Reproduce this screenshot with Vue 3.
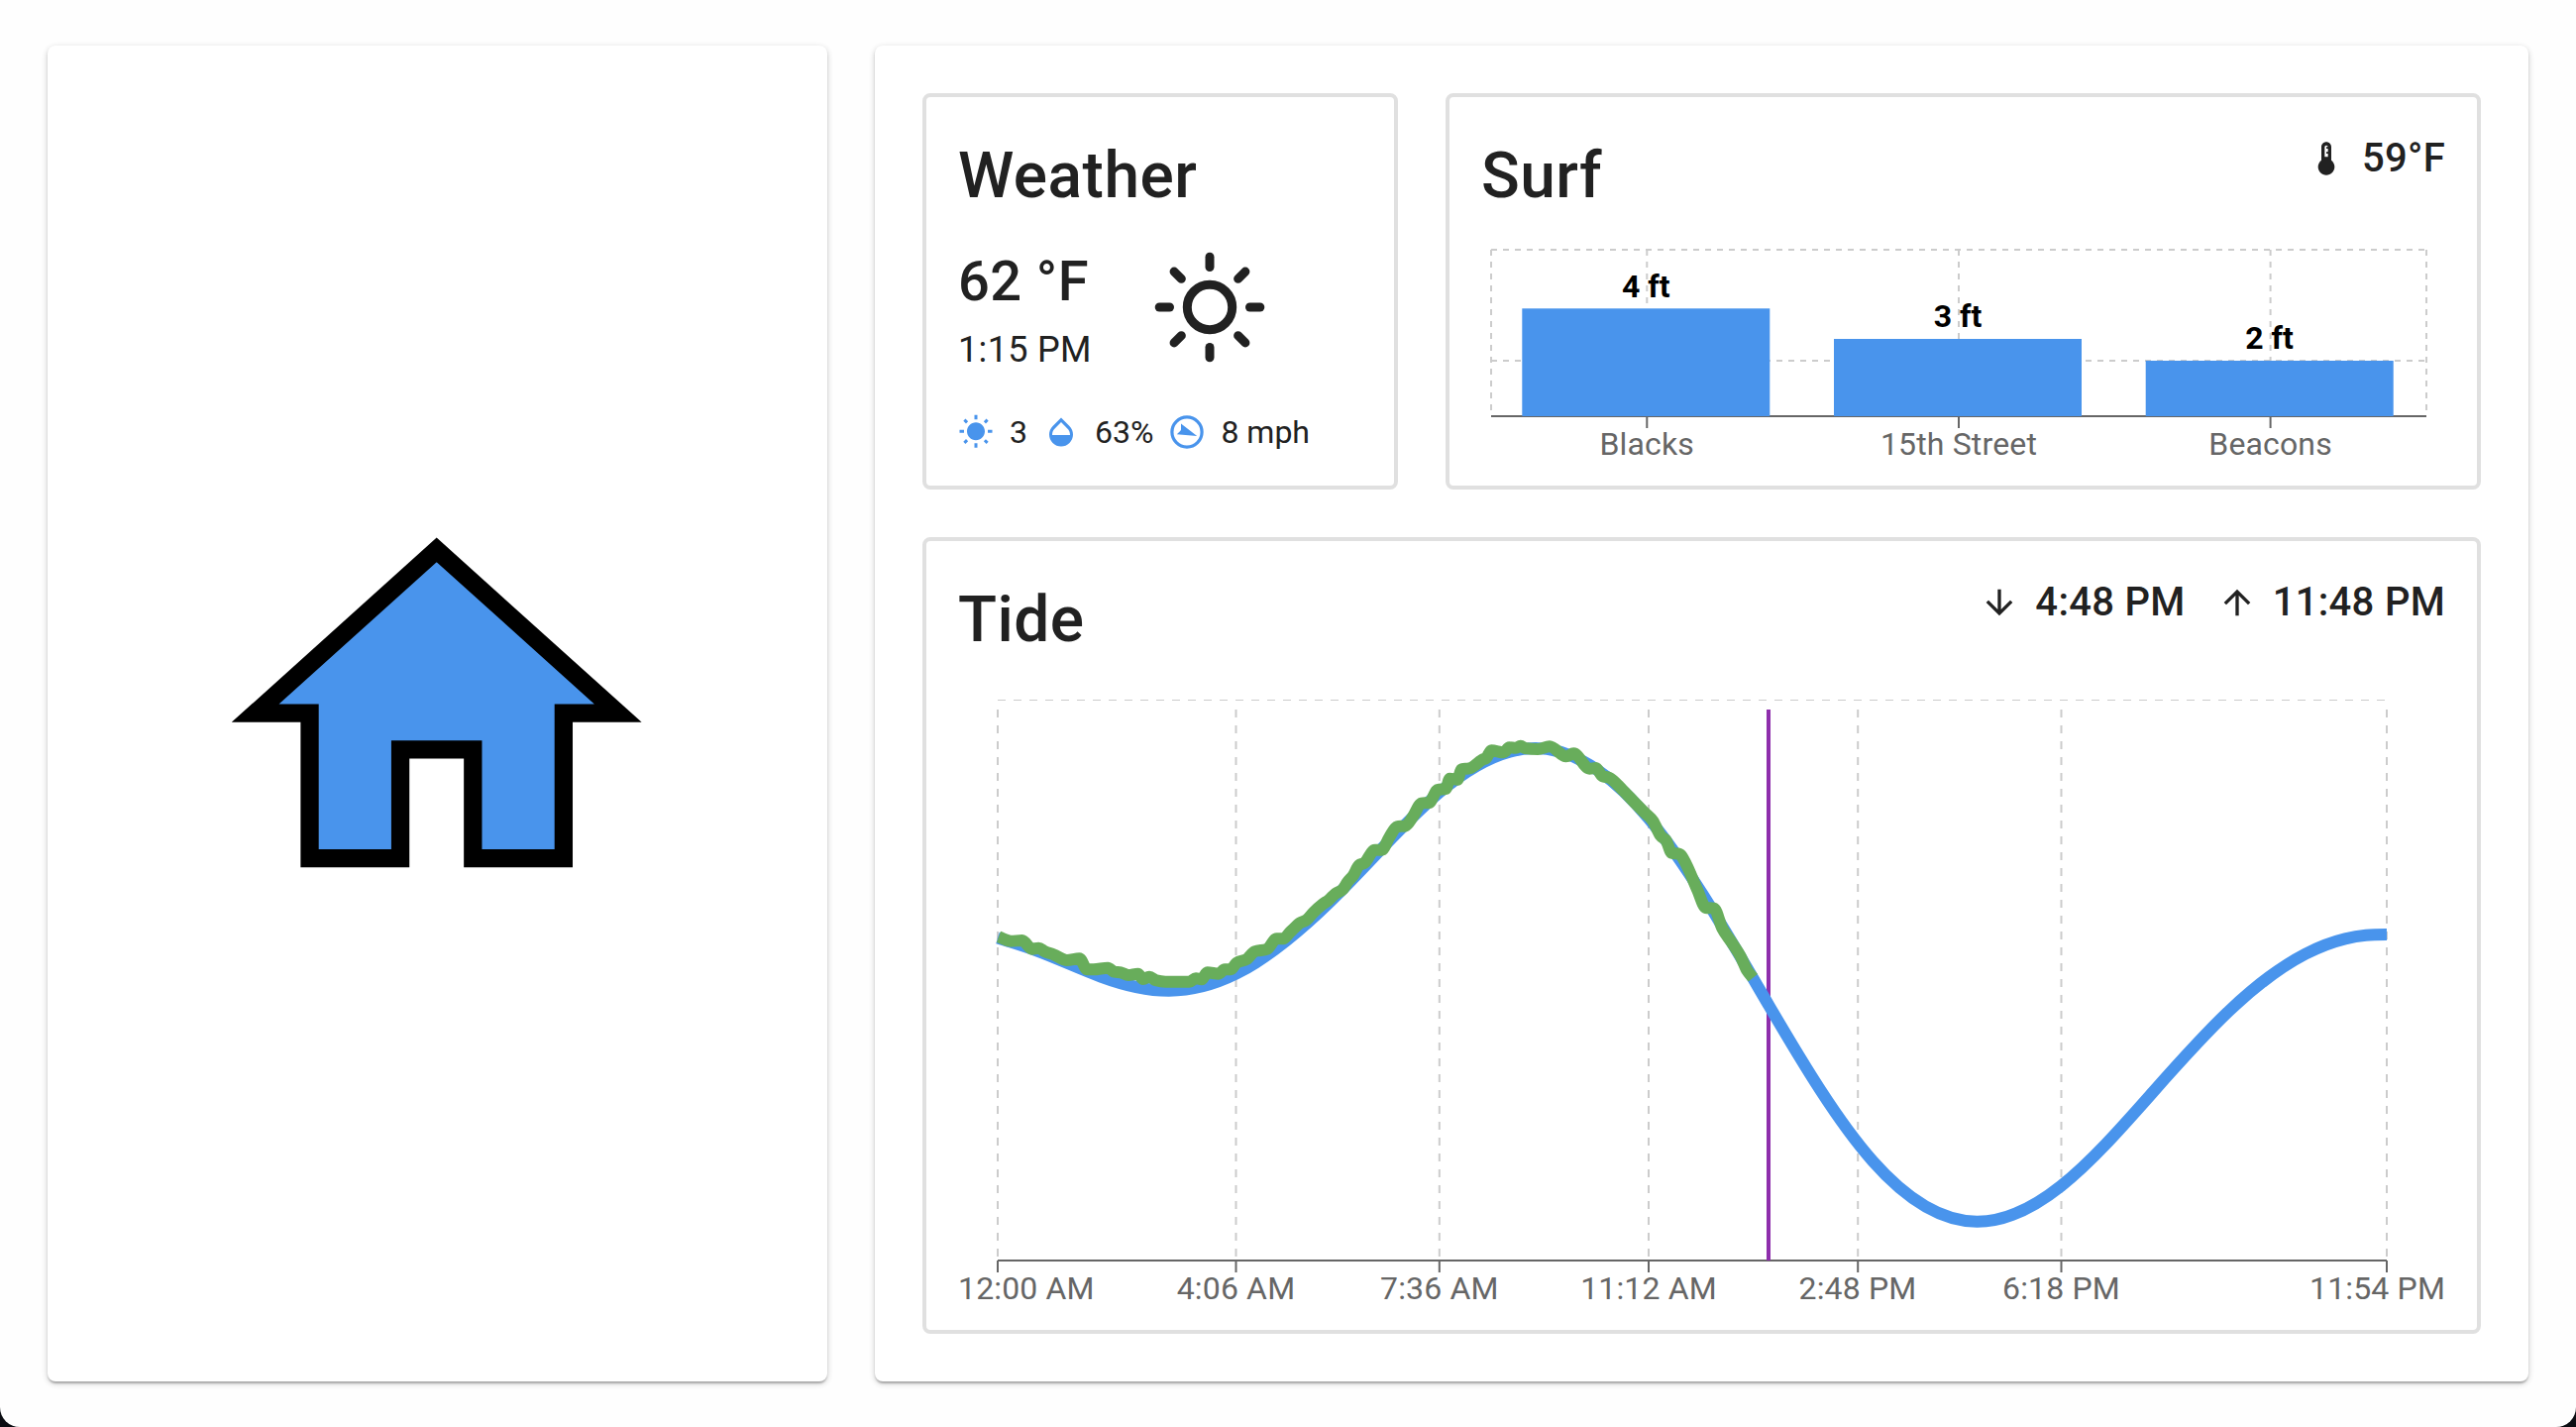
<script setup>
const spots = [
  { name: 'Blacks', label: '4 ft', x: 41.3, top: 69.3, center: 167.3, baseline: 58 },
  { name: '15th Street', label: '3 ft', x: 356, top: 100, center: 482, baseline: 88 },
  { name: 'Beacons', label: '2 ft', x: 670.7, top: 122, center: 796.6, baseline: 110 },
]

const ticks = [
  { label: '12:00 AM', x: 40, textX: 0, anchor: 'start' },
  { label: '4:06 AM', x: 280.5, textX: 280.5, anchor: 'middle' },
  { label: '7:36 AM', x: 485.8, textX: 485.8, anchor: 'middle' },
  { label: '11:12 AM', x: 697, textX: 697, anchor: 'middle' },
  { label: '2:48 PM', x: 908.2, textX: 908, anchor: 'middle' },
  { label: '6:18 PM', x: 1113.5, textX: 1113.5, anchor: 'middle' },
  { label: '11:54 PM', x: 1442, textX: 1501, anchor: 'end' },
]

// Predicted water level, chart coordinates
const predicted = [
  [40, 240.5], [78, 252.8], [144, 279.5], [213, 293.7], [280.5, 276.7], [389, 190.6],
  [486, 93.5], [583, 49], [697, 119.8], [818, 308], [923, 465.5], [1028.3, 526.7],
  [1113.3, 490.7], [1206.3, 395.7], [1283, 314], [1359.7, 256.7], [1400, 241.3], [1421, 237.8], [1442, 237],
]

// Measured water level up to the last reading
const measured = [
  [41, 239.3], [53.3, 243.7], [64.7, 243], [74.7, 251.7], [81.2, 250.7], [87.7, 254.3], [96.5, 257.3],
  [109.9, 263], [122.5, 261.3], [130.2, 272.3], [136.7, 272.3], [151.2, 270.7], [157.7, 274.7],
  [164.3, 275.3], [171.9, 278], [181.5, 276.7], [186.8, 282], [193, 279.7], [199.8, 283.3], [209.4, 284.7],
  [224.7, 284.7], [233.5, 284.7], [240, 281.3], [245.8, 282.3], [251.5, 275.3], [263, 276.7], [269.1, 272.3],
  [275.2, 272.3], [281, 265.7], [291.7, 261.7], [299.3, 254.3], [312, 251.7], [321.5, 241.3], [328, 241.3],
  [335.7, 234], [345.3, 225.3], [351.8, 222.3], [358.7, 214.7], [368.2, 206.3], [374, 202.3], [380.9, 195.7],
  [388.1, 191.7], [393.1, 184], [398.9, 177.3], [404.6, 167.3], [410.3, 164.7], [420.7, 151.7], [427.6, 151.7],
  [435.2, 139], [442.9, 128.3], [451.7, 127.3], [458.9, 118.3], [467.7, 104.7], [475.4, 104], [484, 91],
  [492.3, 90], [496.3, 79.7], [504, 80.7], [508.3, 70.3], [516.3, 69.3], [529.7, 60.3], [533, 59],
  [538.3, 51.3], [550.7, 53.3], [556.3, 48.3], [563, 48.7], [567.7, 46.7], [572.3, 49], [585.3, 50],
  [597, 47.3], [613.7, 57.3], [621.3, 54.3], [637.3, 69.7], [643.7, 69], [650.3, 77.3], [657, 78.7],
  [670.3, 90.7], [683, 104], [693, 114], [701.3, 122.3], [709, 137.3], [714.7, 142.3], [720.3, 154.7],
  [728, 155.7], [734.7, 165.7], [746.3, 192.3], [754.7, 210], [763, 210.7], [771.3, 230.7], [781.3, 245.7],
  [789.7, 259], [796.3, 273.3], [802.3, 280.7],
]

const r = (n) => n.toFixed(2)

function toPath(points, slopes) {
  let d = `M${points[0][0]},${points[0][1]}`
  for (let i = 1; i < points.length; i++) {
    const [x0, y0] = points[i - 1]
    const [x1, y1] = points[i]
    const dx = (x1 - x0) / 3
    d += `C${r(x0 + dx)},${r(y0 + dx * slopes[i - 1])},${r(x1 - dx)},${r(y1 - dx * slopes[i])},${x1},${y1}`
  }
  return d
}

// Natural cubic spline: solves the tridiagonal system for the slope at each knot
function natural(points) {
  const n = points.length
  const a = [], b = [], c = [], d = []
  for (let i = 0; i < n; i++) {
    const hl = i > 0 ? 1 / (points[i][0] - points[i - 1][0]) : 0
    const hr = i < n - 1 ? 1 / (points[i + 1][0] - points[i][0]) : 0
    const sl = i > 0 ? (points[i][1] - points[i - 1][1]) * hl * hl : 0
    const sr = i < n - 1 ? (points[i + 1][1] - points[i][1]) * hr * hr : 0
    a.push(hl)
    b.push(2 * (hl + hr))
    c.push(hr)
    d.push(3 * (sl + sr))
  }
  for (let i = 1; i < n; i++) {
    const w = a[i] / b[i - 1]
    b[i] -= w * c[i - 1]
    d[i] -= w * d[i - 1]
  }
  const m = Array(n).fill(0)
  m[n - 1] = d[n - 1] / b[n - 1]
  for (let i = n - 2; i >= 0; i--) m[i] = (d[i] - c[i] * m[i + 1]) / b[i]
  return toPath(points, m)
}

function monotone(points) {
  const s = points.slice(1).map((p, i) => (p[1] - points[i][1]) / (p[0] - points[i][0]))
  const m = points.map((_, i) => {
    if (i === 0) return s[0]
    if (i === s.length) return s[i - 1]
    const p = s[i - 1], q = s[i]
    return p * q <= 0 ? 0 : Math.sign(p) * Math.min(Math.abs(p), Math.abs(q), Math.abs(p + q) / 4) * 2
  })
  return toPath(points, m)
}

const predictedPath = natural(predicted)
const measuredPath = monotone(measured)
const rays = [0, 45, 90, 135, 180, 225, 270, 315]
</script>

<template>
  <main class="page">
    <section class="card home">
      <svg class="house" viewBox="0 0 24 24">
        <path d="M10 20v-6h4v6h5v-8h3L12 3 2 12h3v8z" />
      </svg>
    </section>

    <section class="card dashboard">
      <div class="row">
        <article class="panel weather">
          <h2>Weather</h2>
          <div class="current">
            <div class="reading">
              <div class="temp">62 °F</div>
              <div class="time">1:15 PM</div>
            </div>
            <svg class="sun" viewBox="-60 -60 120 120">
              <circle r="22.7" />
              <line v-for="a in rays" :key="a" y1="-50.8" y2="-40.5" :transform="`rotate(${a})`" />
            </svg>
          </div>
          <div class="details">
            <svg class="icon blue" viewBox="0 0 24 24">
              <path d="M6.76 4.84l-1.8-1.79-1.41 1.41 1.79 1.79 1.42-1.41zM4 10.5H1v2h3v-2zm9-9.95h-2V3.5h2V.55zm7.45 3.91l-1.41-1.41-1.79 1.79 1.41 1.41 1.79-1.79zm-3.21 13.7l1.79 1.8 1.41-1.41-1.8-1.79-1.4 1.4zM20 10.5v2h3v-2h-3zm-8-5c-3.31 0-6 2.69-6 6s2.69 6 6 6 6-2.69 6-6-2.69-6-6-6zm-1 16.95h2V19.5h-2v2.95zm-7.45-3.91l1.41 1.41 1.79-1.8-1.41-1.41-1.79 1.8z" />
            </svg>
            <span>3</span>
            <svg class="icon blue" viewBox="0 0 24 24">
              <path d="M17.66 8L12 2.35 6.34 8C4.78 9.56 4 11.64 4 13.64s.78 4.11 2.34 5.67 3.61 2.35 5.66 2.35 4.1-.79 5.66-2.35S20 15.64 20 13.64 19.22 9.56 17.66 8zM6 14c.01-2 .62-3.27 1.76-4.4L12 5.27l4.24 4.38C17.38 10.77 17.99 12 18 14H6z" />
            </svg>
            <span>63%</span>
            <svg class="icon blue" viewBox="-18 -18 36 36">
              <circle r="15.1" fill="none" stroke="currentColor" stroke-width="3.2" />
              <path d="M-6-8.4L10.2 4-10.2 2.2Q-6-1.2-6-2.4z" />
            </svg>
            <span>8 mph</span>
          </div>
        </article>

        <article class="panel surf">
          <header>
            <h2>Surf</h2>
            <div class="stat">
              <svg class="icon large" viewBox="0 0 24 24">
                <path d="M15 13V5c0-1.66-1.34-3-3-3S9 3.34 9 5v8c-1.21.91-2 2.37-2 4 0 2.76 2.24 5 5 5s5-2.24 5-5c0-1.63-.79-3.09-2-4zm-4-8c0-.55.45-1 1-1s1 .45 1 1h-1v1h1v2h-1v1h1v2h-2V5z" />
              </svg>
              <span>59°F</span>
            </div>
          </header>
          <svg class="chart surf-chart" viewBox="0 0 973 216">
            <g class="grid short">
              <path d="M10 10H954" />
              <path d="M10 122H954" />
              <path d="M10 10V178" />
              <path v-for="s in spots" :key="s.name" :d="`M${s.center} 10V178`" />
              <path d="M954 10V178" />
            </g>
            <g class="axis">
              <path d="M10 178H954" />
              <path v-for="s in spots" :key="s.name" :d="`M${s.center} 178V190`" />
            </g>
            <g v-for="s in spots" :key="s.name">
              <rect class="bar" :x="s.x" :y="s.top" width="250" :height="178 - s.top" />
              <text class="value" :x="s.center - 1" :y="s.baseline" text-anchor="middle">{{ s.label }}</text>
              <text class="tick" :x="s.center" y="216.7" text-anchor="middle">{{ s.name }}</text>
            </g>
          </svg>
        </article>
      </div>

      <article class="panel tide">
        <header>
          <h2>Tide</h2>
          <div class="stats">
            <div class="stat">
              <svg class="icon large" viewBox="0 0 24 24">
                <path d="M20 12l-1.41-1.41L13 16.17V4h-2v12.17l-5.58-5.59L4 12l8 8 8-8z" />
              </svg>
              <span>4:48 PM</span>
            </div>
            <div class="stat">
              <svg class="icon large" viewBox="0 0 24 24">
                <path d="M4 12l1.41 1.41L11 7.83V20h2V7.83l5.58 5.59L20 12l-8-8-8 8z" />
              </svg>
              <span>11:48 PM</span>
            </div>
          </div>
        </header>
        <svg class="chart tide-chart" viewBox="0 0 1501 604">
          <g class="grid long">
            <path class="thin" d="M40 .5H1442" />
            <path v-for="t in ticks" :key="t.label" :d="`M${t.x} 10V566`" />
          </g>
          <g class="axis">
            <path d="M40 566H1442" />
            <path v-for="t in ticks" :key="t.label" :d="`M${t.x} 566V578`" />
          </g>
          <path class="now" d="M818 10V566" />
          <path class="line predicted" :d="predictedPath" />
          <path class="line measured" :d="measuredPath" />
          <text v-for="t in ticks" :key="t.label" class="tick" :x="t.textX" y="604.7" :text-anchor="t.anchor">{{ t.label }}</text>
        </svg>
      </article>
    </section>
  </main>
</template>

<style>
html,
body {
  margin: 0;
  background: #0b0d12;
}
</style>

<style scoped>
.page {
  box-sizing: border-box;
  width: 2600px;
  height: 1440px;
  padding: 46px 48px 46px 48px;
  display: flex;
  gap: 48px;
  background: #fefefe;
  border-radius: 0 0 20px 20px;
  font-family: Roboto, sans-serif;
  color: #212121;
}

.card {
  box-sizing: border-box;
  background: #fff;
  border-radius: 8px;
  box-shadow: 0 2px 6px rgba(0, 0, 0, 0.2), 0 2px 2px rgba(0, 0, 0, 0.14), 0 4px 2px -2px rgba(0, 0, 0, 0.12);
}

.home {
  width: 787px;
  padding-right: 1px;
  display: flex;
  align-items: center;
  justify-content: center;
}

.house {
  width: 439.4px;
  height: 439.4px;
}

.house path {
  fill: #4994ec;
  stroke: #000;
  stroke-width: 1;
}

.dashboard {
  flex: 1;
  padding: 48px;
  display: flex;
  flex-direction: column;
  gap: 48px;
}

.row {
  height: 400px;
  display: flex;
  gap: 48px;
}

.panel {
  box-sizing: border-box;
  border: 4px solid #e0e0e0;
  border-radius: 8px;
  padding: 32px;
}

.weather {
  width: 480px;
}

.surf,
.tide {
  flex: 1;
}

h2 {
  margin: 0;
  font-size: 64px;
  font-weight: 500;
  line-height: 95px;
  letter-spacing: 0.0075em;
}

header {
  height: 96px;
  display: flex;
  justify-content: space-between;
  align-items: flex-start;
}

.stats {
  display: flex;
  gap: 32px;
}

.stat {
  display: flex;
  align-items: center;
  gap: 16px;
  font-size: 40px;
  font-weight: 500;
  line-height: 60px;
  letter-spacing: 0.0075em;
}

.current {
  display: flex;
  margin-top: 25px;
  height: 120px;
}

.reading {
  width: 193.5px;
  padding-top: 1px;
}

.temp {
  font-size: 56px;
  font-weight: 500;
  line-height: 66px;
  letter-spacing: 0.0075em;
}

.time {
  margin-top: 9px;
  font-size: 36px;
  line-height: 54px;
  letter-spacing: 0.0094em;
}

.sun {
  width: 120px;
  height: 120px;
  fill: none;
  stroke: #212121;
  stroke-width: 9;
  stroke-linecap: round;
}

.details {
  margin-top: 42px;
  display: flex;
  align-items: center;
  gap: 16px;
  font-size: 32px;
  line-height: 48px;
}

.icon {
  width: 36px;
  height: 36px;
  fill: currentColor;
  flex: none;
}

.icon.large {
  width: 40px;
  height: 40px;
}

.blue {
  color: #4994ec;
}

.chart {
  display: block;
  width: 100%;
  overflow: visible;
  font-size: 32px;
}

.surf-chart {
  height: 216px;
  margin-top: 16px;
}

.tide-chart {
  height: 604px;
  margin-top: 32px;
}

.grid path {
  fill: none;
  stroke: #ccc;
  stroke-width: 2;
}

.grid .thin {
  stroke-width: 1;
}

.short path {
  stroke-dasharray: 6 6;
}

.long path {
  stroke-dasharray: 8 8;
}

.axis path {
  stroke: #666;
  stroke-width: 2;
}

.bar {
  fill: #4994ec;
}

.value {
  fill: #000;
  font-weight: 700;
}

.tick {
  fill: #666;
  letter-spacing: 0.15px;
}

.now {
  stroke: #8e2eac;
  stroke-width: 4;
}

.line {
  fill: none;
  stroke-width: 12;
  stroke-linejoin: round;
}

.predicted {
  stroke: #4994ec;
}

.measured {
  stroke: #68ad5b;
}
</style>
